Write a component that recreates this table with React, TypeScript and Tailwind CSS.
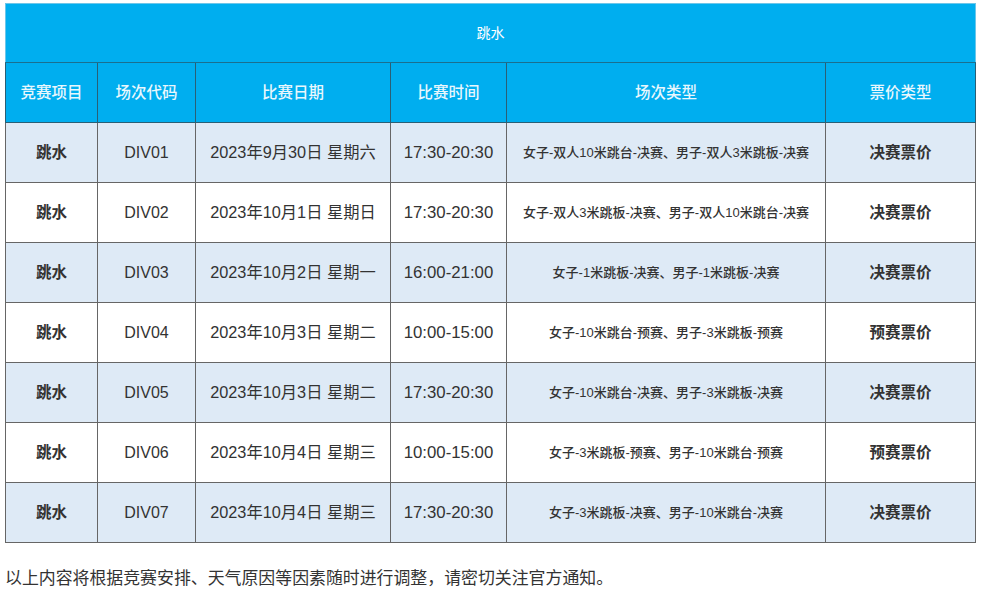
import * as React from "react";

interface Row {
  sport: string;
  code: string;
  date: string;
  time: string;
  kind: string;
  price: string;
}

const rows: Row[] = [
  { sport: "跳水", code: "DIV01", date: "2023年9月30日 星期六", time: "17:30-20:30", kind: "女子-双人10米跳台-决赛、男子-双人3米跳板-决赛", price: "决赛票价" },
  { sport: "跳水", code: "DIV02", date: "2023年10月1日 星期日", time: "17:30-20:30", kind: "女子-双人3米跳板-决赛、男子-双人10米跳台-决赛", price: "决赛票价" },
  { sport: "跳水", code: "DIV03", date: "2023年10月2日 星期一", time: "16:00-21:00", kind: "女子-1米跳板-决赛、男子-1米跳板-决赛", price: "决赛票价" },
  { sport: "跳水", code: "DIV04", date: "2023年10月3日 星期二", time: "10:00-15:00", kind: "女子-10米跳台-预赛、男子-3米跳板-预赛", price: "预赛票价" },
  { sport: "跳水", code: "DIV05", date: "2023年10月3日 星期二", time: "17:30-20:30", kind: "女子-10米跳台-决赛、男子-3米跳板-决赛", price: "决赛票价" },
  { sport: "跳水", code: "DIV06", date: "2023年10月4日 星期三", time: "10:00-15:00", kind: "女子-3米跳板-预赛、男子-10米跳台-预赛", price: "预赛票价" },
  { sport: "跳水", code: "DIV07", date: "2023年10月4日 星期三", time: "17:30-20:30", kind: "女子-3米跳板-决赛、男子-10米跳台-决赛", price: "决赛票价" },
];

const headers = ["竞赛项目", "场次代码", "比赛日期", "比赛时间", "场次类型", "票价类型"];

export default function App() {
  return (
    <div className="h-[591px] w-[984px] bg-white pl-[5px] pt-[3px] font-['Liberation_Sans','Noto_Sans_CJK_SC',sans-serif] text-[#333]">
      <table className="w-[970px] table-fixed border-collapse text-center">
        <colgroup>
          <col className="w-[92px]" />
          <col className="w-[98px]" />
          <col className="w-[195px]" />
          <col className="w-[116px]" />
          <col className="w-[319px]" />
          <col className="w-[150px]" />
        </colgroup>
        <thead>
          <tr className="h-[59px] bg-[#00aeef]">
            <th colSpan={6} className="border border-[#6cc6ea] border-b-[#1b6f8f] text-[14px] font-normal text-white">
              跳水
            </th>
          </tr>
          <tr className="h-[60px] bg-[#00aeef]">
            {headers.map((h) => (
              <th
                key={h}
                className="border border-[#2a5f75] text-[15.5px] font-medium text-[#e8f7fd]"
              >
                {h}
              </th>
            ))}
          </tr>
        </thead>
        <tbody>
          {rows.map((r, i) => (
            <tr key={r.code} className={i % 2 === 0 ? "h-[60px] bg-[#deeaf6]" : "h-[60px] bg-white"}>
              <td className="border border-[#666] text-[15.5px] font-semibold">{r.sport}</td>
              <td className="border border-[#666] text-[16px]">{r.code}</td>
              <td className="border border-[#666] text-[16.3px]">{r.date}</td>
              <td className="border border-[#666] text-[16.8px]">{r.time}</td>
              <td className="border border-[#666] text-[13px] font-medium">{r.kind}</td>
              <td className="border border-[#666] text-[15.5px] font-semibold">{r.price}</td>
            </tr>
          ))}
        </tbody>
      </table>
      <p className="mt-[23px] text-[16.9px] text-[#333]">
        以上内容将根据竞赛安排、天气原因等因素随时进行调整，请密切关注官方通知。
      </p>
    </div>
  );
}
